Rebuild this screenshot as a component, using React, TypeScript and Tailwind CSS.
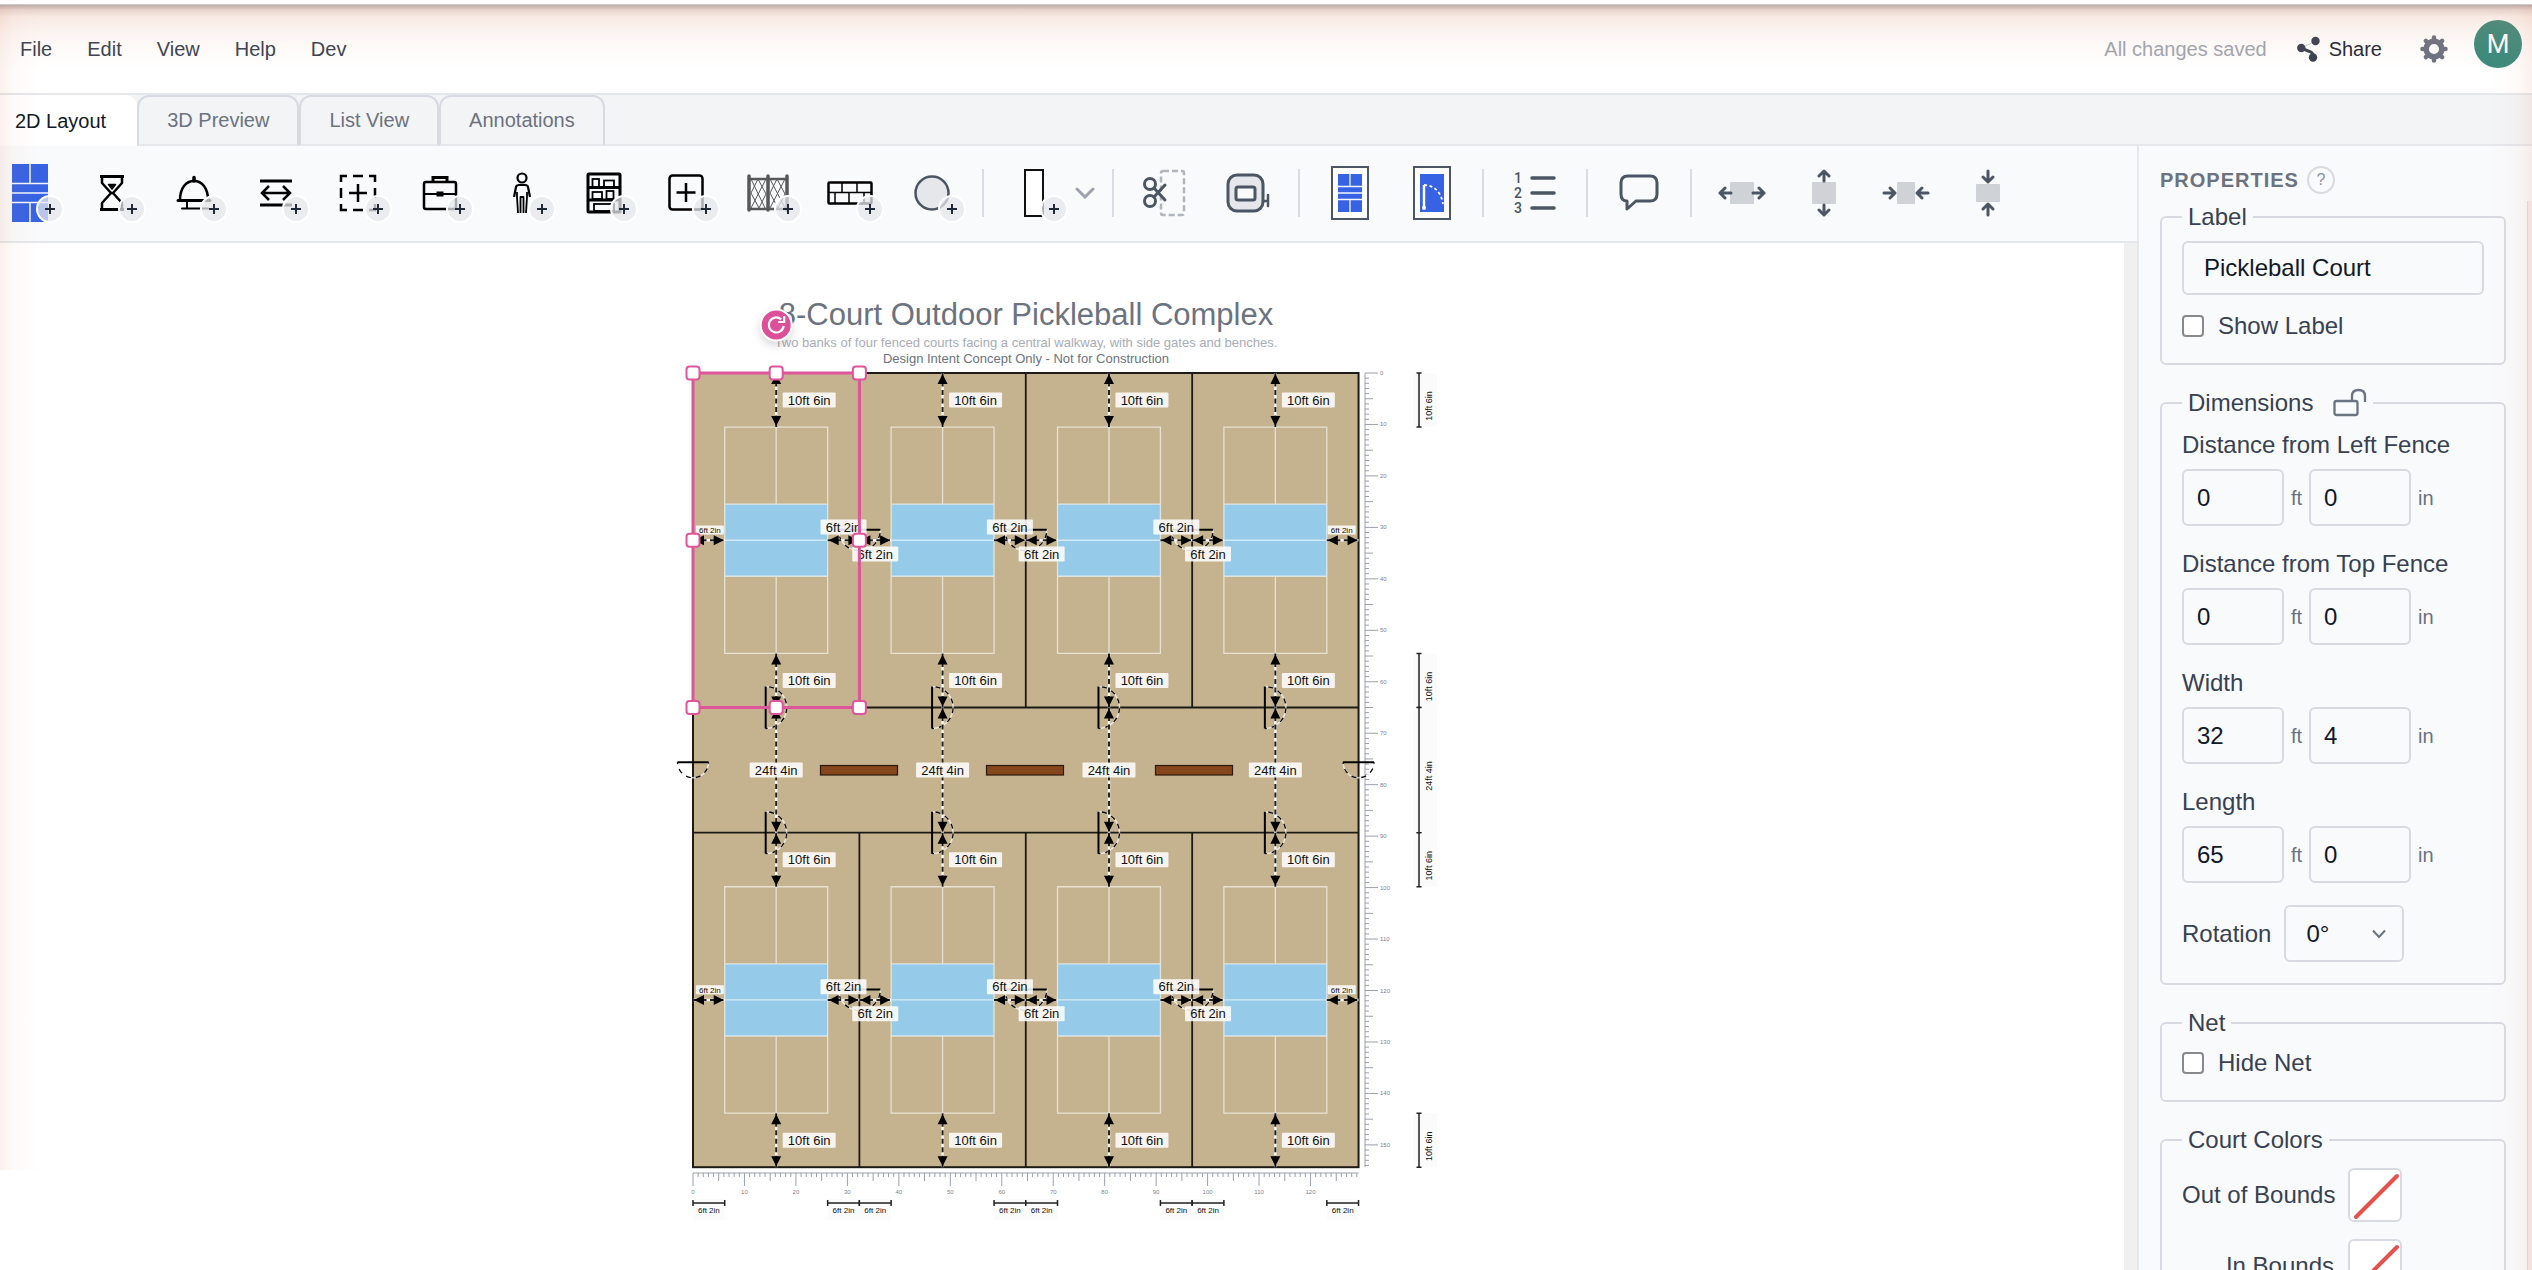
import React, { useId } from "react";

/* ---------- toolbar icons ---------- */

const INK = "#4b5563";

function CourtGlyph() {
  return (
    <svg width="36" height="58" viewBox="0 0 36 58">
      <rect width="36" height="58" fill="#3662e3" />
      <path d="M18 0V19.500M18 38.500V58M0 19.500H36M0 29H36M0 38.500H36" stroke="#f3f6ff" strokeWidth="1.500" />
    </svg>
  );
}

function HourglassGlyph() {
  return (
    <svg width="26" height="38" viewBox="0 0 26 38" fill="none" stroke="#000" strokeWidth="2.500" strokeLinejoin="round">
      <path d="M1 2.500H25M1 35.500H25" strokeWidth="3" />
      <path d="M3 3V9L12 19L3 29V35M23 3V9L14 19L23 29V35M12 18.500L14 19.500" />
      <path d="M9.500 10.500H16.500L13 15Z" fill="#000" strokeWidth="1.500" />
    </svg>
  );
}

function BellGlyph() {
  return (
    <svg width="38" height="36" viewBox="0 0 38 36" fill="none" stroke="#000" strokeLinecap="round">
      <path d="M5 25C5 13 11 6 19 6S33 13 33 25" strokeWidth="2.500" />
      <path d="M3 25.500H35" strokeWidth="3" />
      <path d="M19 2.500V6" strokeWidth="3.500" />
      <path d="M12 26V33M7 33.500H33" strokeWidth="2" />
    </svg>
  );
}

function SpanGlyph() {
  return (
    <svg width="34" height="30" viewBox="0 0 34 30" fill="none" stroke="#000">
      <path d="M1 3H33M1 27H33" strokeWidth="3" />
      <path d="M4 15H30M10 8L3 15L10 22M24 8L31 15L24 22" strokeWidth="2.500" />
    </svg>
  );
}

function DashedPlusGlyph() {
  return (
    <svg width="38" height="38" viewBox="0 0 38 38" fill="none" stroke="#000" strokeWidth="2.500">
      <path d="M2 8V2H8M14 2H24M30 2H36V8M36 14V24M36 30V36H30M24 36H14M8 36H2V30M2 24V14" />
      <path d="M19 10V28M10 19H28" />
    </svg>
  );
}

function BriefcaseGlyph() {
  return (
    <svg width="36" height="36" viewBox="0 0 36 36" fill="none" stroke="#000" strokeWidth="2">
      <rect x="2" y="7" width="32" height="27" rx="2" strokeWidth="2.500" />
      <path d="M11 7V2.500H25V7" strokeWidth="3" />
      <path d="M2 19H34" />
      <rect x="15" y="17" width="6" height="4" fill="#000" strokeWidth="1" />
    </svg>
  );
}

function PersonGlyph() {
  return (
    <svg width="20" height="42" viewBox="0 0 20 42" fill="none" stroke="#000" strokeWidth="2.200" strokeLinejoin="round">
      <circle cx="10" cy="6" r="4.500" />
      <path d="M2 25L4 15Q4.500 13 7 13H13Q15.500 13 16 15L18 25" />
      <path d="M5 20V25L6 41M15 20V25L14 41M8.500 41V25H11.500V41" strokeWidth="1.800" />
    </svg>
  );
}

function ShelfGlyph() {
  return (
    <svg width="36" height="42" viewBox="0 0 36 42" fill="none" stroke="#000">
      <rect x="2" y="2" width="32" height="38" rx="1" strokeWidth="3" />
      <path d="M2 15.500H34M2 28H34" strokeWidth="3" />
      <g strokeWidth="1.800">
        <rect x="6.500" y="7" width="6.500" height="8" />
        <rect x="18" y="8.500" width="10" height="6.500" />
        <rect x="6.500" y="20" width="9.500" height="7" />
        <rect x="20.500" y="19" width="7" height="8" />
        <rect x="8" y="32" width="20" height="7" />
      </g>
    </svg>
  );
}

function BoxPlusGlyph() {
  return (
    <svg width="36" height="37" viewBox="0 0 36 37" fill="none" stroke="#000" strokeWidth="2.500">
      <rect x="1.500" y="1.500" width="33" height="34" rx="3" />
      <path d="M18 9V28M8.500 18.500H27.500" />
    </svg>
  );
}

function FenceGlyph() {
  return (
    <svg width="44" height="38" viewBox="0 0 44 38" fill="none" stroke="#57585a">
      <path d="M5 5L19 34M12 5L20 20M5 19L13 34M20 5L5 34M12 5L5 19M20 20L13 34M24 5L39 34M31 5L39 20M24 19L32 34M39 5L24 34M31 5L24 19M39 20L32 34" strokeWidth="1" />
      <path d="M3 5H41M3 35H41" strokeWidth="2.500" />
      <path d="M3 2V36M22 2V36M41 2V36" strokeWidth="3.500" strokeLinecap="round" />
    </svg>
  );
}

function WallGlyph() {
  return (
    <svg width="46" height="24" viewBox="0 0 46 24" fill="none" stroke="#000">
      <rect x="1.500" y="1.500" width="43" height="21" rx="1" strokeWidth="2.500" />
      <path d="M2 11.500H44M15 2V11.500M30 2V11.500M8 11.500V22M22 11.500V22M37 11.500V22" strokeWidth="1.500" />
    </svg>
  );
}

function CircleGlyph() {
  return (
    <svg width="36" height="36" viewBox="0 0 36 36">
      <circle cx="18" cy="18" r="16.500" fill="#e5e7eb" stroke={INK} strokeWidth="2.500" />
    </svg>
  );
}

function ScissorsGlyph() {
  return (
    <svg width="44" height="48" viewBox="0 0 44 48" fill="none" stroke={INK} strokeWidth="3">
      <rect x="19" y="2" width="23" height="44" rx="2" stroke="#b1b5bc" strokeWidth="2.500" strokeDasharray="6 3" />
      <circle cx="8" cy="15" r="5.500" />
      <circle cx="8" cy="32" r="5.500" />
      <path d="M12 19L23 31M12 28L23 16" strokeLinecap="round" />
    </svg>
  );
}

function TapeGlyph() {
  return (
    <svg width="44" height="40" viewBox="0 0 44 40" fill="none" stroke={INK} strokeWidth="3">
      <rect x="2" y="2" width="35" height="36" rx="9" fill="#e5e7eb" />
      <path d="M37 28H42M42 22V33" strokeWidth="2.500" strokeLinecap="round" />
      <rect x="10" y="14" width="19" height="13" rx="2" fill="#f9fafb" />
    </svg>
  );
}

function FramedCourtGlyph() {
  return (
    <svg width="38" height="54" viewBox="0 0 38 54">
      <rect x="1" y="1" width="36" height="52" fill="#fff" stroke={INK} strokeWidth="2" />
      <rect x="7" y="8" width="24" height="38" fill="#3662e3" />
      <path d="M19 8V20.500M19 33.500V46M7 20.500H31M7 27H31M7 33.500H31" stroke="#f3f6ff" strokeWidth="1.300" />
    </svg>
  );
}

function FramedGateGlyph() {
  return (
    <svg width="38" height="54" viewBox="0 0 38 54" fill="none">
      <rect x="1" y="1" width="36" height="52" fill="#fff" stroke={INK} strokeWidth="2" />
      <rect x="7" y="8" width="24" height="38" fill="#3662e3" />
      <path d="M11 19V42" stroke="#fff" strokeWidth="2.500" />
      <path d="M11 19Q27 20 30 38" stroke="#fff" strokeWidth="1.800" strokeDasharray="3 2.500" />
      <circle cx="11" cy="42" r="2" fill="#fff" />
    </svg>
  );
}

function NumberedListGlyph() {
  return (
    <svg width="44" height="50" viewBox="0 0 44 50">
      <g fill={INK} fontFamily="Roboto, sans-serif" fontSize="14" fontWeight="500">
        <text x="1" y="15">1</text>
        <text x="1" y="30">2</text>
        <text x="1" y="45">3</text>
      </g>
      <path d="M19 10H41M19 25H41M19 40H41" stroke={INK} strokeWidth="3.500" strokeLinecap="round" />
    </svg>
  );
}

function CommentGlyph() {
  return (
    <svg width="40" height="38" viewBox="0 0 40 38" fill="none" stroke={INK} strokeWidth="3" strokeLinejoin="round">
      <path d="M9 2H31Q38 2 38 9V20Q38 27 31 27H17L8 35V27H8Q2 27 2 20V9Q2 2 9 2Z" />
    </svg>
  );
}

type Spread = "out-x" | "out-y" | "in-x" | "in-y";

function SpreadGlyph({ kind }: { kind: Spread }) {
  const arrows = {
    "out-x": "M13 24H2M7 19L2 24L7 29M35 24H46M41 19L46 24L41 29",
    "out-y": "M24 12V2M19 7L24 2L29 7M24 36V46M19 41L24 46L29 41",
    "in-x": "M2 24H13M8 19L13 24L8 29M46 24H35M40 19L35 24L40 29",
    "in-y": "M24 2V12M19 8L24 13L29 8M24 46V36M19 40L24 35L29 40",
  }[kind];
  const box = {
    "out-x": [12, 13, 24, 22],
    "out-y": [12, 13, 24, 22],
    "in-x": [15, 13, 18, 22],
    "in-y": [12, 15, 24, 18],
  }[kind];
  return (
    <svg width="48" height="48" viewBox="0 0 48 48" fill="none">
      <rect x={box[0]} y={box[1]} width={box[2]} height={box[3]} rx="1" fill="#cfd2d7" />
      <path d={arrows} stroke={INK} strokeWidth="3" strokeLinecap="round" strokeLinejoin="round" />
    </svg>
  );
}

function Badge() {
  return (
    <span className="absolute -right-6 top-[31px] flex h-7 w-7 items-center justify-center rounded-full border-2 border-white bg-[#e5e7eb]/75">
      <svg width="10" height="10" viewBox="0 0 10 10">
        <path d="M5 0V10M0 5H10" stroke="#1f2937" strokeWidth="2" />
      </svg>
    </span>
  );
}

function Tool({ label, add, wide, children }: { label: string; add?: boolean; wide?: boolean; children: React.ReactNode }) {
  return (
    <button
      type="button"
      aria-label={label}
      className={`flex h-[58px] shrink-0 items-center justify-center ${wide ? "w-[52px]" : "w-[50px]"}`}
    >
      {add ? (
        <span className="relative flex h-[58px] w-[20px] items-center justify-center">
          <span className="flex shrink-0">{children}</span>
          <Badge />
        </span>
      ) : (
        children
      )}
    </button>
  );
}

function Divider() {
  return <div className="mx-[25px] h-12 w-[2px] shrink-0 bg-[#d9dce2]" />;
}

function Toolbar() {
  return (
    <div className="flex h-[97px] items-center overflow-hidden border-b-2 border-[#e5e7eb] bg-[#f9fafc] pb-[2px] pl-[5px]">
      <div className="flex gap-8">
        <Tool label="Add court" add><CourtGlyph /></Tool>
        <Tool label="Add waiting area" add><HourglassGlyph /></Tool>
        <Tool label="Add service" add><BellGlyph /></Tool>
        <Tool label="Add walkway" add><SpanGlyph /></Tool>
        <Tool label="Add zone" add><DashedPlusGlyph /></Tool>
        <Tool label="Add office" add><BriefcaseGlyph /></Tool>
        <Tool label="Add restroom" add><PersonGlyph /></Tool>
        <Tool label="Add storage" add><ShelfGlyph /></Tool>
        <Tool label="Add object" add><BoxPlusGlyph /></Tool>
        <Tool label="Add fence" add><FenceGlyph /></Tool>
        <Tool label="Add wall" add><WallGlyph /></Tool>
        <Tool label="Add shape" add><CircleGlyph /></Tool>
      </div>
      <Divider />
      <Tool label="Add door" add>
        <svg width="20" height="48" viewBox="0 0 20 48">
          <rect x="1" y="1" width="18" height="46" fill="#fff" stroke="#111" strokeWidth="2" />
        </svg>
      </Tool>
      <button type="button" aria-label="More doors" className="-mr-2 ml-4 w-5">
        <svg width="20" height="12" viewBox="0 0 20 12" fill="none">
          <path d="M2 2L10 10L18 2" stroke="#9ca3af" strokeWidth="3" strokeLinecap="round" />
        </svg>
      </button>
      <Divider />
      <div className="flex gap-[34px]">
        <Tool label="Cut fence"><ScissorsGlyph /></Tool>
        <Tool label="Measure"><TapeGlyph /></Tool>
      </div>
      <Divider />
      <div className="flex gap-8">
        <Tool label="Court view"><FramedCourtGlyph /></Tool>
        <Tool label="Gate view"><FramedGateGlyph /></Tool>
      </div>
      <Divider />
      <Tool label="Numbering" wide><NumberedListGlyph /></Tool>
      <Divider />
      <Tool label="Comment" wide><CommentGlyph /></Tool>
      <Divider />
      <div className="flex gap-8">
        <Tool label="Expand width"><SpreadGlyph kind="out-x" /></Tool>
        <Tool label="Expand height"><SpreadGlyph kind="out-y" /></Tool>
        <Tool label="Shrink width"><SpreadGlyph kind="in-x" /></Tool>
        <Tool label="Shrink height"><SpreadGlyph kind="in-y" /></Tool>
      </div>
    </div>
  );
}

/* ---------- header and tabs ---------- */

function Header() {
  return (
    <header className="flex h-[90px] shrink-0 items-center border-b-2 border-[#e5e7eb] bg-white pl-5 pr-[10px] text-xl text-[#374151]">
      <nav className="flex gap-[35px]">
        {["File", "Edit", "View", "Help", "Dev"].map((m) => (
          <button key={m} type="button">{m}</button>
        ))}
      </nav>
      <span className="ml-auto text-[#a1a5b0]">All changes saved</span>
      <button type="button" className="ml-[30px] flex items-center gap-2 text-[#1f2937]">
        <svg width="24" height="26" viewBox="0 0 24 26" fill="#374151">
          <path d="M4 12L19 5" stroke="#c8ccd2" strokeWidth="1" />
          <path d="M4 12L14 16Q16 17 16 21" stroke="#374151" strokeWidth="3" fill="none" />
          <circle cx="18.500" cy="5" r="4.200" />
          <circle cx="4.300" cy="12" r="4.200" />
          <circle cx="16" cy="21.500" r="4.200" />
        </svg>
        Share
      </button>
      <button type="button" aria-label="Settings" className="ml-[38px]">
        <svg width="28" height="28" viewBox="0 0 28 28" stroke="#6b7280" fill="none">
          <circle cx="14" cy="14" r="7.800" strokeWidth="5.500" />
          {[0, 45, 90, 135, 180, 225, 270, 315].map((a) => (
            <path key={a} d="M14 4.500V2.500" strokeWidth="4.500" strokeLinecap="round" transform={`rotate(${a} 14 14)`} />
          ))}
        </svg>
      </button>
      <button
        type="button"
        className="mb-[10px] ml-[26px] flex h-12 w-12 items-center justify-center rounded-full bg-[#3a8a7c] font-['Roboto',sans-serif] text-[26px] font-normal text-white"
      >
        M
      </button>
    </header>
  );
}

function Tabs() {
  return (
    <div role="tablist" className="flex h-[51px] shrink-0 items-stretch bg-[#f3f4f6] text-xl">
      <button role="tab" aria-selected="true" type="button" className="rounded-tr-xl bg-white pl-[15px] pr-[31px] text-[#111827]">
        2D Layout
      </button>
      {["3D Preview", "List View", "Annotations"].map((t) => (
        <button
          key={t}
          role="tab"
          aria-selected="false"
          type="button"
          className="rounded-t-xl border-2 border-[#d8dae1] border-b-[#e5e7eb] px-7 pb-[2px] text-[#6b7280]"
        >
          {t}
        </button>
      ))}
      <div className="grow border-b-2 border-[#e5e7eb]" />
    </div>
  );
}

/* ---------- court plan ---------- */

const FT = 5.146;
const CELL_W = 32.3333 * FT;
const CELL_H = 65 * FT;
const ROW2 = 89.3333 * FT;
const PLAN_W = CELL_W * 4;
const PLAN_H = 154.3333 * FT;
const SIDE = 6.1667 * FT;
const END = 10.5 * FT;
const MID_Y = 32.5 * FT;

function Arrow({ x1, y1, x2, y2 }: { x1: number; y1: number; x2: number; y2: number }) {
  const vertical = x1 === x2;
  const heads = vertical
    ? `M${x1} ${y1 + 1}l-5 10h10zM${x1} ${y2 - 1}l-5 -10h10z`
    : `M${x1 + 1} ${y1}l10 -5v10zM${x2 - 1} ${y1}l-10 -5v10z`;
  return (
    <g>
      <path d={`M${x1} ${y1}L${x2} ${y2}`} stroke="#fff" strokeWidth="2.400" strokeOpacity="0.9" />
      <path d={`M${x1} ${y1}L${x2} ${y2}`} stroke="#222" strokeWidth="2" strokeDasharray="5 3.500" />
      <path d={heads} fill="#000" />
    </g>
  );
}

function Tag({ cx, cy, w, size, children }: { cx: number; cy: number; w: number; size: number; children: string }) {
  const h = size === 13 ? 15 : 9;
  return (
    <g>
      <rect x={cx - w / 2} y={cy - h / 2} width={w} height={h} rx="1" fill="#fff" fillOpacity="0.86" />
      <text x={cx} y={cy + size * 0.36} fontSize={size} textAnchor="middle" fill="#111">
        {children}
      </text>
    </g>
  );
}

function Gate({ cx, cy, r, turn }: { cx: number; cy: number; r: number; turn: number }) {
  const arc = `M${-r} 0A${r} ${r} 0 0 0 ${r} 0`;
  return (
    <g transform={`translate(${cx} ${cy}) rotate(${turn}) translate(0 ${-r / 2})`} fill="none">
      <path d={arc} stroke="#fff" strokeOpacity="0.7" strokeWidth="1.500" />
      <path d={arc} stroke="#000" strokeWidth="1.300" strokeDasharray="5 5" strokeDashoffset="-7" />
      <path d={`M${-r} 0H${r}`} stroke="#000" strokeWidth="2" />
    </g>
  );
}

function Court({ x, y }: { x: number; y: number }) {
  const w = 20 * FT;
  const h = 44 * FT;
  return (
    <g transform={`translate(${x + SIDE} ${y + END})`}>
      <rect y={15 * FT} width={w} height={14 * FT} fill="#95cbe8" />
      <path
        d={`M0 0H${w}V${h}H0ZM0 ${15 * FT}H${w}M0 ${22 * FT}H${w}M0 ${29 * FT}H${w}M${w / 2} 0V${15 * FT}M${w / 2} ${29 * FT}V${h}`}
        fill="none"
        stroke="#fff"
        strokeOpacity="0.6"
        strokeWidth="1.300"
      />
    </g>
  );
}

function Rulers() {
  const down = Array.from({ length: 155 }, (_, i) => i);
  const across = Array.from({ length: 130 }, (_, i) => i);
  const len = (i: number) => (i % 10 === 0 ? 13 : i % 5 === 0 ? 8 : 4);
  return (
    <g fill="#7d828e" fontSize="6">
      <path
        d={`M672 0V${PLAN_H}` + down.map((i) => `M672 ${i * FT}h${len(i)}`).join("")}
        stroke="#9a9fab"
        strokeWidth="1"
        fill="none"
      />
      <path
        d={`M0 800H${PLAN_W}` + across.map((i) => `M${i * FT} 800v${len(i)}`).join("")}
        stroke="#9a9fab"
        strokeWidth="1"
        fill="none"
      />
      {down.filter((i) => i % 10 === 0).map((i) => (
        <text key={i} x="687" y={i * FT + 2}>{i}</text>
      ))}
      {across.filter((i) => i % 10 === 0).map((i) => (
        <text key={i} x={i * FT} y="821" textAnchor="middle">{i}</text>
      ))}
    </g>
  );
}

function OuterDimensions() {
  const vertical: [number, number, string][] = [
    [0, END, "10ft 6in"],
    [CELL_H - END, CELL_H, "10ft 6in"],
    [CELL_H, ROW2, "24ft 4in"],
    [ROW2, ROW2 + END, "10ft 6in"],
    [PLAN_H - END, PLAN_H, "10ft 6in"],
  ];
  const starts = [0, 1, 2, 3].flatMap((c) => [c * CELL_W, (c + 1) * CELL_W - SIDE]);
  return (
    <g fill="#111">
      {vertical.map(([a, b, t]) => (
        <g key={a}>
          <rect x="720" y={a} width="24" height={b - a} fill="#fbfbfb" />
          <path d={`M726 ${a}V${b}M723.500 ${a}h5M723.500 ${b}h5`} stroke="#222" strokeWidth="1.500" />
          <text fontSize="9" textAnchor="middle" transform={`translate(739 ${(a + b) / 2 + 6}) rotate(-90)`}>
            {t}
          </text>
        </g>
      ))}
      {starts.map((a) => (
        <g key={a}>
          <rect x={a} y="826" width={SIDE} height="21" fill="#fbfbfb" />
          <path d={`M${a} 830h${SIDE}M${a} 827v6M${a + SIDE} 827v6`} stroke="#222" strokeWidth="1.500" />
          <text x={a + SIDE / 2} y="840" fontSize="8" textAnchor="middle">6ft 2in</text>
        </g>
      ))}
    </g>
  );
}

function Selection() {
  const handles = [
    [0, 0], [CELL_W / 2, 0], [CELL_W, 0],
    [0, MID_Y], [CELL_W, MID_Y],
    [0, CELL_H], [CELL_W / 2, CELL_H], [CELL_W, CELL_H],
  ];
  return (
    <g>
      <rect width={CELL_W} height={CELL_H} fill="none" stroke="#de559c" strokeWidth="3" />
      {handles.map(([x, y]) => (
        <rect key={`${x}-${y}`} x={x - 6.5} y={y - 6.5} width="13" height="13" rx="3" fill="#fff" stroke="#de559c" strokeWidth="2" />
      ))}
      <g transform={`translate(${CELL_W / 2} -48)`}>
        <circle r="15.500" fill="#dc4f99" stroke="#fff" strokeWidth="2" className="drop-shadow-lg" />
        <path d="M7.500 1A7.500 7.500 0 1 1 5 -5.700" fill="none" stroke="#fff" strokeWidth="2.200" />
        <path d="M8 -9V-3H2" fill="none" stroke="#fff" strokeWidth="2.200" />
      </g>
    </g>
  );
}

function CourtPlan() {
  const cols = [0, 1, 2, 3];
  const rows = [0, ROW2];
  return (
    <svg
      width="776"
      height="871"
      viewBox="-19 -6 776 871"
      className="overflow-visible"
      fontFamily="'Liberation Sans', Arial, sans-serif"
      role="img"
      aria-label="Plan of eight pickleball courts"
    >
      <Rulers />
      <OuterDimensions />
      <rect width={PLAN_W} height={PLAN_H} fill="#c5b38f" />
      {rows.map((y) => cols.map((c) => <Court key={`${y}-${c}`} x={c * CELL_W} y={y} />))}
      <rect width={PLAN_W} height={PLAN_H} fill="none" stroke="#1d1a15" strokeWidth="2" />
      <path
        d={
          `M0 ${CELL_H}H${PLAN_W}M0 ${ROW2}H${PLAN_W}` +
          [1, 2, 3].map((c) => `M${c * CELL_W} 0V${CELL_H}M${c * CELL_W} ${ROW2}V${PLAN_H}`).join("")
        }
        stroke="#1d1a15"
        strokeWidth="1.800"
      />
      {[127, 293, 462].map((x) => (
        <rect key={x} x={x + 0.5} y="392.500" width="77" height="9.500" fill="#86461b" stroke="#2b1a0c" strokeWidth="1.200" />
      ))}

      {cols.map((c) => {
        const x = (c + 0.5) * CELL_W;
        return (
          <g key={c}>
            <Gate cx={x} cy={CELL_H} r={21} turn={-90} />
            <Gate cx={x} cy={ROW2} r={21} turn={-90} />
          </g>
        );
      })}
      {rows.map((y) => [1, 2, 3].map((c) => <Gate key={`${y}-${c}`} cx={c * CELL_W} cy={y + MID_Y} r={21} turn={0} />))}
      <Gate cx={0} cy={397} r={15.5} turn={0} />
      <Gate cx={PLAN_W} cy={397} r={15.5} turn={0} />

      {cols.map((c) => {
        const x = (c + 0.5) * CELL_W;
        return (
          <g key={c}>
            {rows.map((y) => (
              <g key={y}>
                <Arrow x1={x} y1={y} x2={x} y2={y + END} />
                <Arrow x1={x} y1={y + CELL_H - END} x2={x} y2={y + CELL_H} />
                <Tag cx={x + 33} cy={y + END / 2} w={53} size={13}>10ft 6in</Tag>
                <Tag cx={x + 33} cy={y + CELL_H - END / 2} w={53} size={13}>10ft 6in</Tag>
                <Arrow x1={c * CELL_W} y1={y + MID_Y} x2={c * CELL_W + SIDE} y2={y + MID_Y} />
                <Arrow x1={(c + 1) * CELL_W - SIDE} y1={y + MID_Y} x2={(c + 1) * CELL_W} y2={y + MID_Y} />
              </g>
            ))}
            <Arrow x1={x} y1={CELL_H} x2={x} y2={ROW2} />
            <Tag cx={x} cy={397} w={53} size={13}>24ft 4in</Tag>
          </g>
        );
      })}
      {rows.map((y) => (
        <g key={y}>
          <Tag cx={SIDE / 2 + 1} cy={y + 157} w={28} size={8}>6ft 2in</Tag>
          <Tag cx={PLAN_W - SIDE / 2 - 1} cy={y + 157} w={28} size={8}>6ft 2in</Tag>
          {[1, 2, 3].map((c) => (
            <g key={c}>
              <Tag cx={c * CELL_W - SIDE / 2} cy={y + 154} w={46} size={13}>6ft 2in</Tag>
              <Tag cx={c * CELL_W + SIDE / 2} cy={y + 181} w={46} size={13}>6ft 2in</Tag>
            </g>
          ))}
        </g>
      ))}
      <Selection />
    </svg>
  );
}

function Canvas() {
  return (
    <div className="flex min-h-0 grow">
      <main className="flex grow justify-center overflow-hidden bg-white pt-[52px]">
        <div className="flex w-[776px] shrink-0 flex-col">
          <div className="w-[704px] text-center text-[13px] leading-4">
            <h1 className="text-[31px] leading-10 text-[#6b7280]">8-Court Outdoor Pickleball Complex</h1>
            <p className="whitespace-nowrap text-[#a8acb6]">
              Two banks of four fenced courts facing a central walkway, with side gates and benches.
            </p>
            <p className="text-[#6b7280]">Design Intent Concept Only - Not for Construction</p>
          </div>
          <CourtPlan />
        </div>
      </main>
      <div className="w-[13px] shrink-0 bg-[#f0f0f0]" />
    </div>
  );
}

/* ---------- properties panel ---------- */

const BOX = "rounded-md border-2 border-[#d8dae1] bg-[#f9fafc] text-[#111827]";

function Group({ title, icon, children }: { title: string; icon?: React.ReactNode; children: React.ReactNode }) {
  return (
    <fieldset className="rounded-md border-2 border-[#d8dae1] px-5 pb-[21px] pt-2">
      <legend className="px-[6px] leading-8">
        <span className="flex items-center gap-5">
          {title}
          {icon}
        </span>
      </legend>
      {children}
    </fieldset>
  );
}

function Measure({ label, ft, inches }: { label: string; ft: string; inches: string }) {
  const id = useId();
  return (
    <div className="flex flex-col gap-2">
      <label htmlFor={id}>{label}</label>
      <div className="flex items-center text-xl text-[#6b7280]">
        <input id={id} defaultValue={ft} className={`${BOX} h-[57px] w-[102px] px-[13px] text-2xl`} />
        <span className="w-[25px] text-center">ft</span>
        <input aria-label={`${label} inches`} defaultValue={inches} className={`${BOX} h-[57px] w-[102px] px-[13px] text-2xl`} />
        <span className="ml-[7px]">in</span>
      </div>
    </div>
  );
}

function Check({ label }: { label: string }) {
  return (
    <label className="flex items-center gap-[14px]">
      <input type="checkbox" className="h-[22px] w-[22px] appearance-none rounded-[4px] border-2 border-[#8a8a8c] bg-white" />
      {label}
    </label>
  );
}

function Swatch({ label }: { label: string }) {
  const id = useId();
  return (
    <div className="flex items-center gap-[14px]">
      <label htmlFor={id} className="w-[152px] whitespace-nowrap text-right">{label}</label>
      <button id={id} type="button" className="flex h-[54px] w-[54px] items-center justify-center rounded-md border-2 border-[#d8dae1] bg-white">
        <svg width="50" height="50" viewBox="0 0 50 50">
          <path d="M6 47L47 6" stroke="#e2524e" strokeWidth="4" strokeLinecap="round" />
        </svg>
      </button>
    </div>
  );
}

function Properties() {
  return (
    <aside className="flex w-[395px] shrink-0 flex-col overflow-hidden border-l-2 border-[#e5e7eb] bg-[#f9fafc] text-2xl leading-8 text-[#374151]">
      <div className="flex items-center gap-2 pb-[7px] pl-[21px] pt-5">
        <h2 className="text-xl leading-7 font-bold tracking-wider text-[#6b7280]">PROPERTIES</h2>
        <button type="button" className="h-7 w-7 rounded-full border-2 border-[#d8dae1] text-base leading-6 text-[#8b909b]">?</button>
      </div>
      <div className="flex min-h-0 grow">
        <div className="flex grow flex-col gap-[22px] px-[21px]">
          <Group title="Label">
            <input aria-label="Label" defaultValue="Pickleball Court" className={`${BOX} h-[54px] w-full px-5`} />
            <div className="mt-[15px]">
              <Check label="Show Label" />
            </div>
          </Group>
          <Group
            title="Dimensions"
            icon={
              <svg width="34" height="30" viewBox="0 0 34 30" fill="none" stroke="#6b7280" strokeWidth="2.300">
                <rect x="1.500" y="13" width="23" height="14" rx="2" />
                <path d="M19 13V8Q19 2 25.500 2T32 8V14" />
              </svg>
            }
          >
            <div className="flex flex-col gap-[22px] pt-[2px]">
              <Measure label="Distance from Left Fence" ft="0" inches="0" />
              <Measure label="Distance from Top Fence" ft="0" inches="0" />
              <Measure label="Width" ft="32" inches="4" />
              <Measure label="Length" ft="65" inches="0" />
              <label className="flex items-center gap-[13px]">
                Rotation
                <span className="relative flex items-center">
                  <select className={`${BOX} h-[57px] w-[120px] appearance-none px-5`} defaultValue="0">
                    <option value="0">0°</option>
                    <option value="90">90°</option>
                  </select>
                  <svg width="16" height="10" viewBox="0 0 16 10" fill="none" className="pointer-events-none absolute right-[17px]">
                    <path d="M2 1.500L8 8L14 1.500" stroke="#6b7280" strokeWidth="2" />
                  </svg>
                </span>
              </label>
            </div>
          </Group>
          <Group title="Net">
            <Check label="Hide Net" />
          </Group>
          <Group title="Court Colors">
            <div className="flex flex-col gap-[17px] pt-1">
              <Swatch label="Out of Bounds" />
              <Swatch label="In Bounds" />
            </div>
          </Group>
        </div>
        <div className="w-[5px] shrink-0 border-l border-[#e6dcdc] bg-[#f6eeee]" />
      </div>
    </aside>
  );
}

/* ---------- warm glow round the window's edge ---------- */

function EdgeGlow() {
  return (
    <div aria-hidden="true" className="pointer-events-none absolute inset-x-0 bottom-0 top-[5px]">
      <div className="absolute inset-x-0 top-0 h-[68px] bg-[linear-gradient(to_bottom,rgba(110,70,60,0.45)_0,rgba(170,100,75,0.28)_5px,rgba(215,130,95,0.17)_12px,rgba(220,140,105,0.09)_28px,rgba(225,150,120,0.03)_48px,transparent_100%)]" />
      <div className="absolute bottom-[100px] left-0 top-0 w-[44px] bg-[linear-gradient(to_right,rgba(215,120,85,0.11)_0,rgba(220,140,105,0.05)_12px,rgba(225,150,120,0.02)_26px,transparent_100%)]" />
      <div className="absolute inset-y-0 right-0 w-[44px] bg-[linear-gradient(to_left,rgba(215,120,85,0.11)_0,rgba(220,140,105,0.05)_12px,rgba(225,150,120,0.02)_26px,transparent_100%)]" />
    </div>
  );
}

export default function App() {
  return (
    <div className="relative flex h-screen flex-col overflow-hidden bg-white font-['Liberation_Sans',Arial,sans-serif]">
      <div className="h-[5px] shrink-0 border-b border-[#cfcbca]" />
      <Header />
      <Tabs />
      <div className="flex min-h-0 grow">
        <div className="flex min-w-0 grow flex-col">
          <Toolbar />
          <Canvas />
        </div>
        <Properties />
      </div>
      <EdgeGlow />
    </div>
  );
}
